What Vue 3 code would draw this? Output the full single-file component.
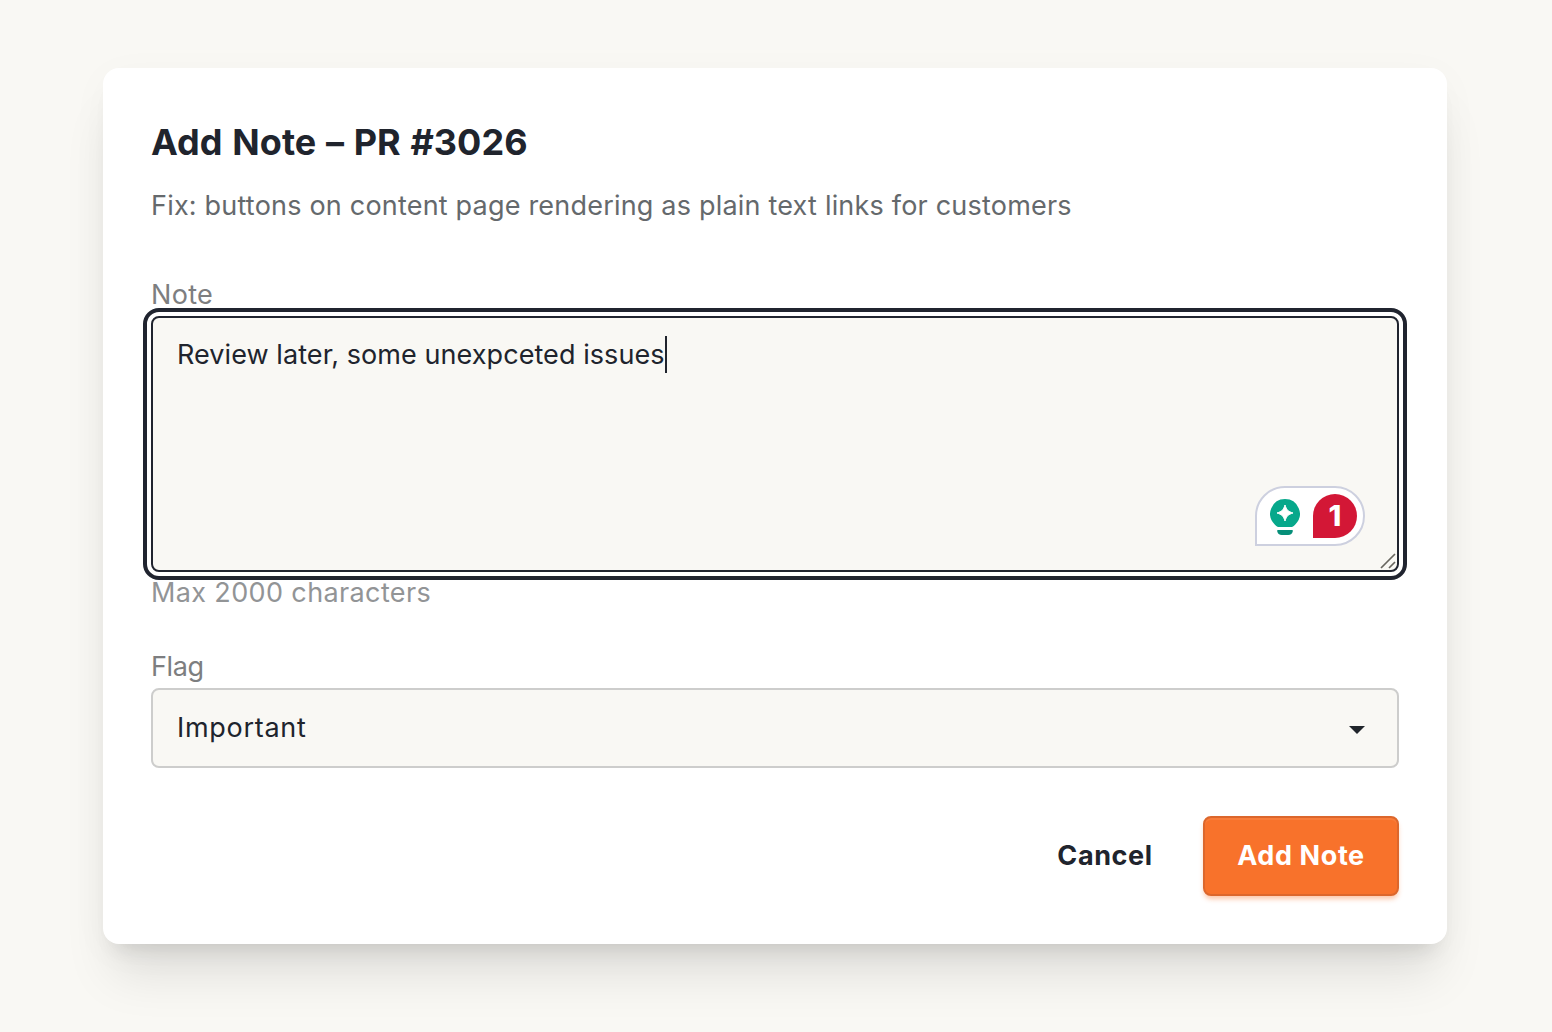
<script setup>
import { ref } from 'vue'

const emit = defineEmits(["close", "save"])

const title = ref("Add Note – PR #3026")
const description = ref("Fix: buttons on content page rendering as plain text links for customers")
const note = ref("Review later, some unexpceted issues")
const flag = ref("Important")
const issues = ref(1)

function submitNote() {
  emit("save", { note: note.value, flag: flag.value })
}
</script>

<template>
  <main class="page">
    <section class="card">
      <h1>{{ title }}</h1>
      <p class="description">{{ description }}</p>

      <div class="label note-label">Note</div>
      <div class="textarea" role="textbox" aria-multiline="true">
        <span class="note-text">{{ note }}</span><span class="caret"></span>
        <div class="checker">
          <svg class="bulb" width="30" height="36" viewBox="0 0 30 36">
            <path d="M15 0a15 14.800 0 0 1 10.500 25.200Q23.800 27.500 22 28H8Q6.200 27.500 4.500 25.200A15 14.800 0 0 1 15 0Z" fill="#07a88b" />
            <path d="M15 6C16.600 11 18 12.400 23 14C18 15.600 16.600 17 15 22C13.400 17 12 15.600 7 14C12 12.400 13.400 11 15 6Z" fill="#fff" stroke="#fff" stroke-width="1" stroke-linejoin="round" />
            <path d="M7.300 31h15.400v1.200q-.6 3.800-4.500 3.800h-6.400q-3.900 0-4.500-3.800z" fill="#068f79" />
          </svg>
          <span class="count">{{ issues }}</span>
        </div>
        <svg class="resizer" width="16" height="16" viewBox="0 0 16 16">
          <path d="M1 15L15 1M9 15L15 9" stroke="#68665f" stroke-width="1.700" fill="none" />
        </svg>
      </div>
      <div class="hint">Max 2000 characters</div>

      <div class="label flag-label">Flag</div>
      <div class="select" role="combobox">
        <span>{{ flag }}</span>
        <svg width="16" height="8" viewBox="0 0 16 8"><path d="M0 0h16L8 8z" fill="#20252b" /></svg>
      </div>

      <div class="actions">
        <button class="cancel" @click="$emit('close')">Cancel</button>
        <button class="submit" @click="submitNote">Add Note</button>
      </div>
    </section>
  </main>
</template>

<style>
body {
  background-color: #f9f8f4;
}
</style>

<style scoped>
.page {
  box-sizing: border-box;
  height: 1032px;
  padding: 68px 105px 88px 103px;
  overflow: hidden;
  background-color: #f9f8f4;
  color: #20242d;
  font-family: Inter, "Liberation Sans", sans-serif;
  font-size: 27px;
}

.card {
  box-sizing: border-box;
  height: 876px;
  padding: 48px;
  border-radius: 16px;
  background-color: white;
  box-shadow: 0 40px 50px -10px rgba(0, 0, 0, 0.1), 0 16px 20px -12px rgba(0, 0, 0, 0.1), 0 8px 40px rgba(0, 0, 0, 0.03);
}

h1 {
  margin: 0;
  font-size: 36px;
  font-weight: 700;
  line-height: 53px;
  letter-spacing: 0.05px;
  word-spacing: 1.1px;
  white-space: nowrap;
}

.description {
  margin: 17px 0 0;
  color: #65696c;
  line-height: 40px;
  letter-spacing: 0.2px;
  white-space: nowrap;
}

.label {
  color: #7d7e80;
  line-height: 43px;
}

.note-label {
  margin-top: 47px;
  letter-spacing: 0.3px;
}

.textarea {
  position: relative;
  box-sizing: border-box;
  display: flex;
  height: 256px;
  padding: 16px 24px;
  border: 2px solid #20242f;
  border-radius: 8px;
  outline: 4px solid #20242f;
  outline-offset: 4px;
  background-color: #f9f8f4;
  line-height: 40px;
}

.note-text {
  padding-top: 1px;
  letter-spacing: 0.07px;
}

.caret {
  width: 2px;
  height: 37px;
  margin-top: 2px;
  background-color: #20242d;
}

.checker {
  position: absolute;
  right: 32px;
  bottom: 24px;
  box-sizing: border-box;
  display: flex;
  justify-content: space-between;
  align-items: center;
  width: 110px;
  height: 60px;
  padding: 0 6px 0 13px;
  border: 2px solid #cdd0df;
  border-radius: 30px 30px 30px 0;
  background-color: white;
}

.bulb {
  margin-top: 2px;
}

.count {
  width: 44px;
  height: 44px;
  border-radius: 22px 22px 22px 0;
  background-color: #d31736;
  color: white;
  font-size: 29px;
  font-weight: 800;
  line-height: 44px;
  text-align: center;
}

.resizer {
  position: absolute;
  right: 1px;
  bottom: 1px;
}

.hint {
  color: #929496;
  line-height: 41px;
  letter-spacing: 0.37px;
}

.flag-label {
  margin-top: 32px;
  letter-spacing: -0.4px;
}

.select {
  box-sizing: border-box;
  display: flex;
  justify-content: space-between;
  align-items: center;
  height: 80px;
  padding: 0 32px 0 24px;
  border: 2px solid #cdcdcc;
  border-radius: 8px;
  background-color: #f9f8f4;
  letter-spacing: 0.7px;
}

.select span {
  padding-bottom: 2px;
}

.select svg {
  margin-top: 4px;
}

.actions {
  display: flex;
  justify-content: flex-end;
  gap: 16px;
  margin-top: 48px;
}

button {
  box-sizing: border-box;
  height: 80px;
  padding: 0 0 2px;
  border: none;
  border-radius: 8px;
  background: none;
  color: #20242d;
  font-family: inherit;
  font-size: 27px;
  font-weight: 700;
  letter-spacing: 0.6px;
  white-space: nowrap;
}

.cancel {
  width: 164px;
}

.submit {
  width: 196px;
  border: 2px solid #dc672c;
  background-color: #f8722b;
  color: white;
  box-shadow: inset 0 2px 0 #f97d3b, 0 4px 5px -1px rgba(248, 114, 43, 0.4);
}
</style>
